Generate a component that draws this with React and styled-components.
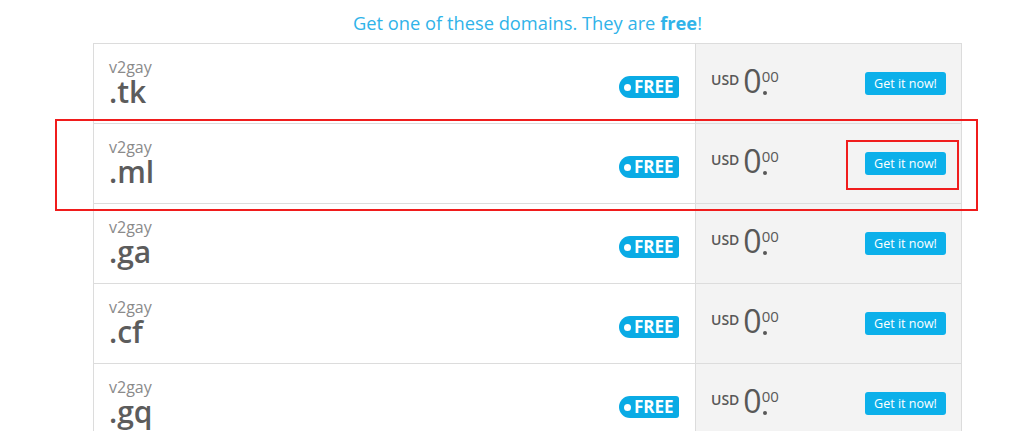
import styled, { createGlobalStyle } from "styled-components"

const GlobalStyle = createGlobalStyle`
    body {
        margin: 0;
        background: #fff;
        font-family: 'Open Sans', 'Liberation Sans', sans-serif;
    }
`

const Page = styled.div`
    position: relative;
    width: 1024px;
    height: 431px;
    overflow: hidden;
    background: #fff;
`

const Title = styled.h2`
    margin: 0 0 0 93px;
    width: 869px;
    height: 43px;
    box-sizing: border-box;
    padding-top: 2px;
    line-height: 41px;
    text-align: center;
    font-size: 18.3px;
    font-weight: 400;
    color: #30b3e9;
    b {
        font-weight: 700;
    }
`

const Table = styled.div`
    margin-left: 93px;
    width: 869px;
    box-sizing: border-box;
    border: 1px solid #dcdcdc;
    border-bottom: none;
`

const Row = styled.div`
    display: grid;
    grid-template-columns: 601px 1fr;
    height: 80px;
    box-sizing: border-box;
    border-bottom: 1px solid #dcdcdc;
`

const DomainCell = styled.div`
    display: flex;
    justify-content: space-between;
    align-items: flex-start;
    padding: 0 16px 0 15px;
`

const Name = styled.div`
    padding-top: 14px;
`

const Sub = styled.div`
    font-size: 16px;
    line-height: 18px;
    color: #8a8a8a;
`

const Tld = styled.div`
    font-size: 30px;
    font-weight: 600;
    line-height: 32px;
    color: #5c5c5c;
`

const Badge = styled.div`
    margin-top: 32px;
    display: flex;
    align-items: center;
    gap: 3px;
    width: 60px;
    height: 22px;
    box-sizing: border-box;
    padding-left: 5px;
    background: #0aabe5;
    border-radius: 11px 3px 3px 11px;
    color: #fff;
    font-size: 17px;
    font-weight: 700;
    line-height: 22px;
    &::before {
        content: "";
        width: 7px;
        height: 7px;
        border-radius: 50%;
        background: #fff;
    }
`

const PriceCell = styled.div`
    display: flex;
    justify-content: space-between;
    align-items: center;
    padding: 0 15px 0 15px;
    background: #f3f3f3;
    border-left: 1px solid #dcdcdc;
`

const Price = styled.div`
    display: flex;
    align-items: flex-start;
    align-self: flex-start;
    margin-top: 21px;
    color: #585858;
`

const Currency = styled.span`
    margin-top: 8px;
    margin-right: 4px;
    font-size: 14px;
    font-weight: 600;
    line-height: 14px;
`

const Amount = styled.span`
    font-size: 32px;
    line-height: 32px;
`

// "00" on top, the decimal point drawn beneath it
const Decimal = styled.span`
    display: flex;
    flex-direction: column;
    margin-top: 5px;
    &::after {
        content: "";
        width: 4px;
        height: 4px;
        margin-top: 8px;
        margin-left: 1px;
        border-radius: 50%;
        background: #585858;
    }
`

const Cents = styled.span`
    font-size: 15px;
    line-height: 13px;
`

const Button = styled.button`
    width: 81px;
    height: 23px;
    padding: 0;
    border: none;
    border-radius: 3px;
    background: #0cb0ea;
    color: #fff;
    font-family: inherit;
    font-size: 12.5px;
    cursor: pointer;
`

const Mark = styled.div`
    position: absolute;
    left: ${p => p.x}px;
    top: ${p => p.y}px;
    width: ${p => p.w}px;
    height: ${p => p.h}px;
    box-sizing: border-box;
    border: 2px solid #f01c1c;
    pointer-events: none;
`

const domains = [".tk", ".ml", ".ga", ".cf", ".gq"]

export default function App() {
    return <Page>
        <GlobalStyle />
        <Title>Get one of these domains. They are <b>free</b>!</Title>
        <Table>
            {domains.map((tld) => (
                <Row key={tld}>
                    <DomainCell>
                        <Name>
                            <Sub>v2gay</Sub>
                            <Tld>{tld}</Tld>
                        </Name>
                        <Badge>FREE</Badge>
                    </DomainCell>
                    <PriceCell>
                        <Price>
                            <Currency>USD</Currency>
                            <Amount>0</Amount>
                            <Decimal>
                                <Cents>00</Cents>
                            </Decimal>
                        </Price>
                        <Button>Get it now!</Button>
                    </PriceCell>
                </Row>
            ))}
        </Table>
        <Mark x={55} y={119} w={923} h={92} />
        <Mark x={846} y={140} w={113} h={50} />
    </Page>
}
